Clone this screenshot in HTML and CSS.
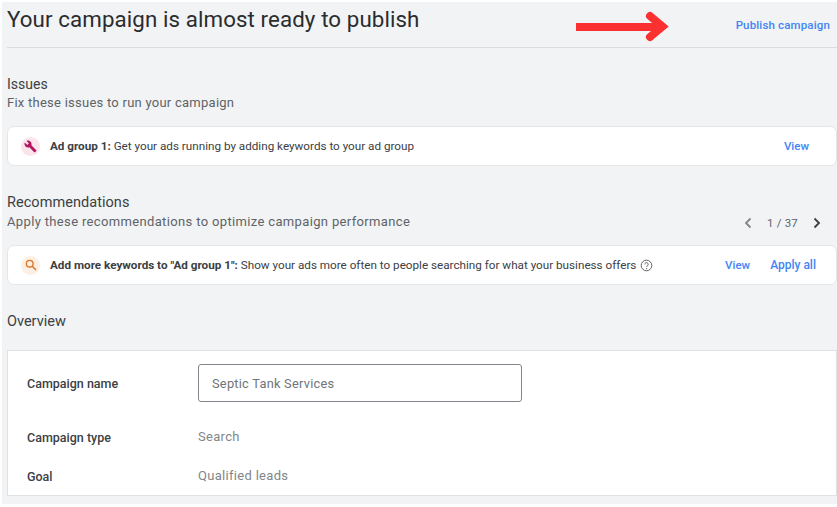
FILE: index.html
```html
<!DOCTYPE html>
<html lang="en">
<head>
<meta charset="utf-8">
<title>Publish campaign</title>
<link rel="stylesheet" href="styles.css">
</head>
<body>
<main class="page">
  <header class="head">
    <h1 class="title">Your campaign is almost ready to publish</h1>
    <div class="head-actions">
      <svg class="arrow" width="96" height="36" viewBox="0 0 96 36" aria-hidden="true">
        <path d="M0 14H84V22H0Z" fill="#fb3030"/>
        <path d="M74 7L86.500 17.500L74 28" fill="none" stroke="#fb3030" stroke-width="8" stroke-linecap="round" stroke-linejoin="miter"/>
      </svg>
      <a class="link publish">Publish campaign</a>
    </div>
  </header>

  <section class="issues">
    <h2 class="sec-title">Issues</h2>
    <p class="sec-sub">Fix these issues to run your campaign</p>
    <div class="row-card">
      <span class="badge badge-pink">
        <svg width="13" height="13" viewBox="0 0 24 24" aria-hidden="true"><path fill="#b0175f" d="M22.700 19l-9.100-9.100c.9-2.300.4-5-1.500-6.900-2-2-5-2.400-7.400-1.300L9 6 6 9 1.600 4.700C.4 7.100.9 10.100 2.900 12.100c1.900 1.900 4.600 2.400 6.900 1.500l9.100 9.100c.4.400 1 .4 1.400 0l2.300-2.300c.5-.4.500-1.100.1-1.400z"/></svg>
      </span>
      <p class="msg"><b>Ad group 1:</b> Get your ads running by adding keywords to your ad group</p>
      <a class="link view-one">View</a>
    </div>
  </section>

  <section class="recs">
    <h2 class="sec-title">Recommendations</h2>
    <div class="sub-row">
      <p class="sec-sub">Apply these recommendations to optimize campaign performance</p>
      <div class="pager">
        <svg width="16" height="16" viewBox="0 0 16 16" aria-hidden="true"><path d="M10.500 3.500L6 8l4.500 4.500" fill="none" stroke="#80868b" stroke-width="1.800"/></svg>
        <span class="pager-text">1 / 37</span>
        <svg width="16" height="16" viewBox="0 0 16 16" aria-hidden="true"><path d="M5.500 3.500L10 8l-4.500 4.500" fill="none" stroke="#3c4043" stroke-width="1.800"/></svg>
      </div>
    </div>
    <div class="row-card">
      <span class="badge badge-orange">
        <svg width="12" height="12" viewBox="0 0 14 14" aria-hidden="true"><circle cx="5.500" cy="5.500" r="3.900" fill="none" stroke="#d9762a" stroke-width="1.600"/><path d="M8.500 8.500L12.800 12.800" stroke="#d9762a" stroke-width="1.800"/></svg>
      </span>
      <p class="msg"><b>Add more keywords to "Ad group 1":</b> Show your ads more often to people searching for what your business offers</p>
      <svg class="help" width="13" height="13" viewBox="0 0 13 13" aria-hidden="true"><circle cx="6.500" cy="6.500" r="5.300" fill="none" stroke="#5f6368" stroke-width="1"/><path d="M4.800 5.300a1.700 1.700 0 1 1 2.700 1.400c-.6.400-1 .7-1 1.300" fill="none" stroke="#5f6368" stroke-width="1"/><circle cx="6.500" cy="9.600" r=".6" fill="#5f6368"/></svg>
      <a class="link view-two">View</a>
      <a class="link apply">Apply all</a>
    </div>
  </section>

  <section class="overview">
    <h2 class="sec-title">Overview</h2>
    <div class="ov-card">
      <div class="ov-row ov-name">
        <span class="ov-label">Campaign name</span>
        <div class="ov-input">Septic Tank Services</div>
      </div>
      <div class="ov-row ov-type">
        <span class="ov-label">Campaign type</span>
        <span class="ov-value">Search</span>
      </div>
      <div class="ov-row ov-goal">
        <span class="ov-label">Goal</span>
        <span class="ov-value">Qualified leads</span>
      </div>
    </div>
  </section>
</main>
</body>
</html>
```
FILE: styles.css
```css
* { box-sizing: border-box; }
html, body { margin: 0; height: 100%; }
body {
  background: #fff;
  font-family: Roboto, "Liberation Sans", sans-serif;
  color: #3c4043;
  overflow: hidden;
}
.page {
  margin-top: 2px;
  margin-left: 2px;
  height: 502px;
  width: 835px;
  background: #f1f3f4;
  padding-left: 4px;
}
h1, h2, p { margin: 0; font-weight: 400; }
.head {
  display: flex;
  justify-content: space-between;
  height: 46px;
  border-bottom: 1px solid #dadce0;
  margin-left: 1px;
}
.title {
  font-size: 22.300px;
  line-height: 34px;
  color: #2a2c2f;
  letter-spacing: 0.1px;
}
.head-actions { display: flex; align-items: flex-start; }
.arrow { margin-top: 7px; margin-right: 64px; }
.link { color: #4285f4; font-size: 11.500px; font-weight: 500; }
.publish { margin-top: 16px; margin-right: 7px; letter-spacing: 0.15px; }
.sec-title { font-size: 14.500px; line-height: 20px; color: #3c4043; margin-left: 1px; }
.sec-sub { font-size: 13px; line-height: 18px; color: #5f6368; letter-spacing: 0.25px; margin-left: 1px; }
.issues { padding-top: 26px; }
.issues .sec-title { font-size: 14px; }
.row-card {
  display: flex;
  align-items: center;
  height: 40px;
  width: 830px;
  margin-top: 14px;
  margin-left: 1px;
  background: #fff;
  border: 1px solid #e4e6e8;
  border-radius: 7px;
  padding-left: 13px;
}
.badge {
  flex: none;
  display: flex;
  align-items: center;
  justify-content: center;
  width: 19px;
  height: 19px;
  border-radius: 50%;
  margin-right: 10px;
}
.badge-pink { background: #fce4ec; }
.badge-orange { background: #feefe3; }
.msg { font-size: 11.700px; color: #3c4043; white-space: nowrap; }
.msg b { font-weight: 700; }
.view-one { margin-left: auto; margin-right: 27px; }
.recs { padding-top: 27px; }
.recs .sec-title { letter-spacing: 0.05px; margin-bottom: -1px; }
.recs .sec-sub { letter-spacing: 0.35px; }
.sub-row { display: flex; justify-content: space-between; align-items: center; }
.pager { display: flex; align-items: center; margin-right: 12px; margin-top: 3px; }
.pager-text { font-size: 11.500px; color: #5f6368; margin: 0 11px 0 11px; letter-spacing: .2px; }
.recs .row-card { margin-top: 14px; }
.help { margin-left: 4px; flex: none; }
.view-two { margin-left: auto; }
.apply { margin-left: 20px; margin-right: 20px; font-size: 12px; }
.overview { padding-top: 27px; }
.ov-card {
  width: 830px;
  height: 146px;
  margin-top: 18px;
  margin-left: 1px;
  background: #fff;
  border: 1px solid #dfe1e5;
  padding: 13px 0 0 19px;
}
.ov-row { display: flex; align-items: flex-start; }
.ov-label { width: 171px; font-size: 12.500px; font-weight: 500; line-height: 16px; padding-top: 1px; color: #3c4043; flex: none; }
.ov-value { font-size: 13px; line-height: 16px; color: #80868b; letter-spacing: .3px; }
.ov-name { align-items: center; }
.ov-input {
  width: 324px;
  height: 38px;
  border: 1px solid #80868b;
  border-radius: 3px;
  padding-left: 13px;
  font-size: 12.800px;
  line-height: 38px;
  color: #70757a;
  letter-spacing: .25px;
}
.ov-type { margin-top: 27px; }
.ov-goal { margin-top: 22px; }
```
